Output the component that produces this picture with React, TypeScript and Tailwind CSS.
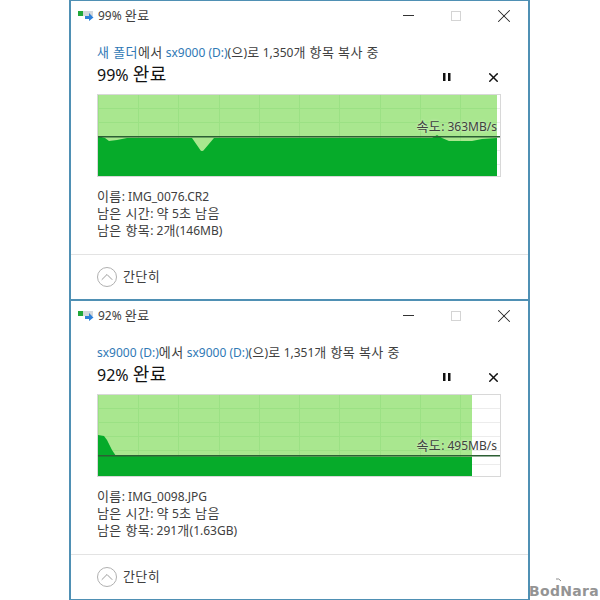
import type { ReactNode } from "react";
import { ChevronUp, X } from "lucide-react";

const font = "font-['Noto_Sans','Noto_Sans_CJK_KR',sans-serif]";

const verticals = [1, 41, 81, 122, 162, 202, 242, 283, 323, 363];
const horizontals = [14, 28, 42, 56, 70];

// korean runs are wider in the screenshot than the latin around them
function K({ children }: { children: ReactNode }) {
    return <span className="text-[13px] leading-none tracking-[0.4px]">{children}</span>;
}

function CopyIcon() {
    return (
        <svg width="16" height="12" viewBox="0 0 16 12">
            <rect x="0" y="1" width="15" height="5" fill="#d4d8dc" />
            <rect x="0" y="1" width="5" height="5" fill="#22a83a" />
            <path d="M7 6h4V3l4.500 4.500L11 11V9H7z" fill="#2f80d8" />
        </svg>
    );
}

function PauseIcon() {
    return (
        <svg width="8" height="8" viewBox="0 0 8 8" className="mr-[35px] mt-[4px]">
            <rect x="0" y="0" width="2.500" height="8" fill="#111" />
            <rect x="5" y="0" width="2.500" height="8" fill="#111" />
        </svg>
    );
}

function Chart({
    area,
    line,
    end,
}: {
    area: string;
    line: number;
    end: number;
}) {
    return (
        <svg width="404" height="83" viewBox="0 0 404 83" className="block">
            <rect x="0.500" y="0.500" width="403" height="82" fill="#fff" stroke="#d8d8d8" />
            {horizontals.map((y) => (
                <line key={y} x1="1" x2="403" y1={y + 0.5} y2={y + 0.5} stroke="#ececec" />
            ))}
            <rect x="1" y="1" width={end - 1} height="81" fill="#a9e78f" />
            {verticals.map((x) =>
                x < end ? (
                    <line key={x} x1={x + 0.5} x2={x + 0.5} y1="1" y2="82" stroke="#9be184" />
                ) : null
            )}
            {horizontals.map((y) => (
                <line key={y} x1="1" x2={end} y1={y + 0.5} y2={y + 0.5} stroke="#9be184" />
            ))}
            <path d={area} fill="#06ab2a" />
            <rect x="1" y={line - 1} width="402" height="1.500" fill="#2c5f34" />
        </svg>
    );
}

function CopyWindow({
    percent,
    source,
    count,
    name,
    left,
    speed,
    area,
    line,
    end,
    labelClass,
}: {
    percent: string;
    source: ReactNode;
    count: string;
    name: string;
    left: ReactNode;
    speed: string;
    area: string;
    line: number;
    end: number;
    labelClass: string;
}) {
    return (
        <div className="h-[301px] w-[461px] border-x-2 border-b-2 border-[#4f90b4] text-[12px] leading-[17px] text-[#404040]">
            <div className="flex h-[31px] items-center pl-[7px]">
                <CopyIcon />
                <span className="ml-[4px] flex-1">
                    {percent}% <K>완료</K>
                </span>
                <div className="mr-[37px] h-px w-[11px] bg-[#333]" />
                <div className="mr-[32px] h-[10px] w-[10px] border border-[#d4d4d4]" />
                <X size={22} strokeWidth={1.1} className="mr-[13px] text-[#222]" />
            </div>

            <div className="pl-[26px] pr-[27px]">
                <div className="mt-[13px] h-[17px] whitespace-nowrap">
                    <span className="text-[#2f78b5]">{source}</span>
                    <K>에서</K>{" "}
                    <span className="text-[#2f78b5]">sx9000 (D:)</span>(<K>으</K>)<K>로</K> {count}
                    <K>개 항목 복사 중</K>
                </div>
                <div className="mt-[2px] flex h-[24px] items-center text-[16px] text-[#111]">
                    <span className="flex-1">
                        {percent}% <span className="text-[18px] tracking-[0.5px]">완료</span>
                    </span>
                    <PauseIcon />
                    <X size={15} strokeWidth={2.4} className="mt-[4px] text-[#111]" />
                </div>

                <div className="relative mt-[7px] h-[83px] w-[404px]">
                    <Chart area={area} line={line} end={end} />
                    <div className={`absolute right-[4px] whitespace-nowrap ${labelClass} [text-shadow:0_0_3px_rgba(255,255,255,0.7)]`}>
                        <K>속도</K>: {speed}MB/s
                    </div>
                </div>

                <div className="mt-[11px]">
                    <div>
                        <K>이름</K>: {name}
                    </div>
                    <div>
                        <K>남은 시간</K>: <K>약</K> 5<K>초 남음</K>
                    </div>
                    <div>
                        <K>남은 항목</K>: {left}
                    </div>
                </div>
            </div>

            <div className="mt-[15px] flex h-[44px] items-center border-t border-[#e3e3e3] pl-[26px]">
                <div className="flex h-[20px] w-[20px] items-center justify-center rounded-full border border-[#b0b0b0]">
                    <ChevronUp size={20} strokeWidth={1} className="shrink-0 text-[#888]" />
                </div>
                <span className="ml-[6px]">
                    <K>간단히</K>
                </span>
            </div>
        </div>
    );
}

export default function App() {
    return (
        <div className={`relative h-[600px] w-[600px] overflow-hidden bg-white ${font}`}>
            <div className="absolute left-[69px] top-0 h-px w-[461px] bg-[#4f90b4]" />
            <div className="ml-[69px] flex w-[461px] flex-col">
                <CopyWindow
                    percent="99"
                    source={<K>새 폴더</K>}
                    count="1,350"
                    name="IMG_0076.CR2"
                    left={
                        <>
                            2<K>개</K>(146MB)
                        </>
                    }
                    speed="363"
                    line={43}
                    end={400}
                    labelClass="top-[24px]"
                    area="M1 42L8 44L12 47L20 46L30 44L95 44L104 57L106 57L117 44L335 44L340 41L345 44L352 47L375 47L385 45L400 44L400 82L1 82Z"
                />
                <div className="-mt-px">
                    <CopyWindow
                        percent="92"
                        source="sx9000 (D:)"
                        count="1,351"
                        name="IMG_0098.JPG"
                        left={
                            <>
                                291<K>개</K>(1.63GB)
                            </>
                        }
                        speed="495"
                        line={62}
                        end={375}
                        labelClass="top-[43px]"
                        area="M1 41L7 42L10 46L15 56L19 62L375 63L375 82L1 82Z"
                    />
                </div>
            </div>
            <svg width="8" height="4" viewBox="0 0 8 4" className="absolute left-[555px] top-[578px]">
                <path d="M1 1Q4 0 6 3" fill="none" stroke="#8c8c8c" />
            </svg>
            <div className="absolute left-[529px] top-[583px] font-['DejaVu_Sans'] text-[14px] font-bold leading-[17px] tracking-[0.3px] text-[#949494]">
                BodNara
            </div>
        </div>
    );
}
